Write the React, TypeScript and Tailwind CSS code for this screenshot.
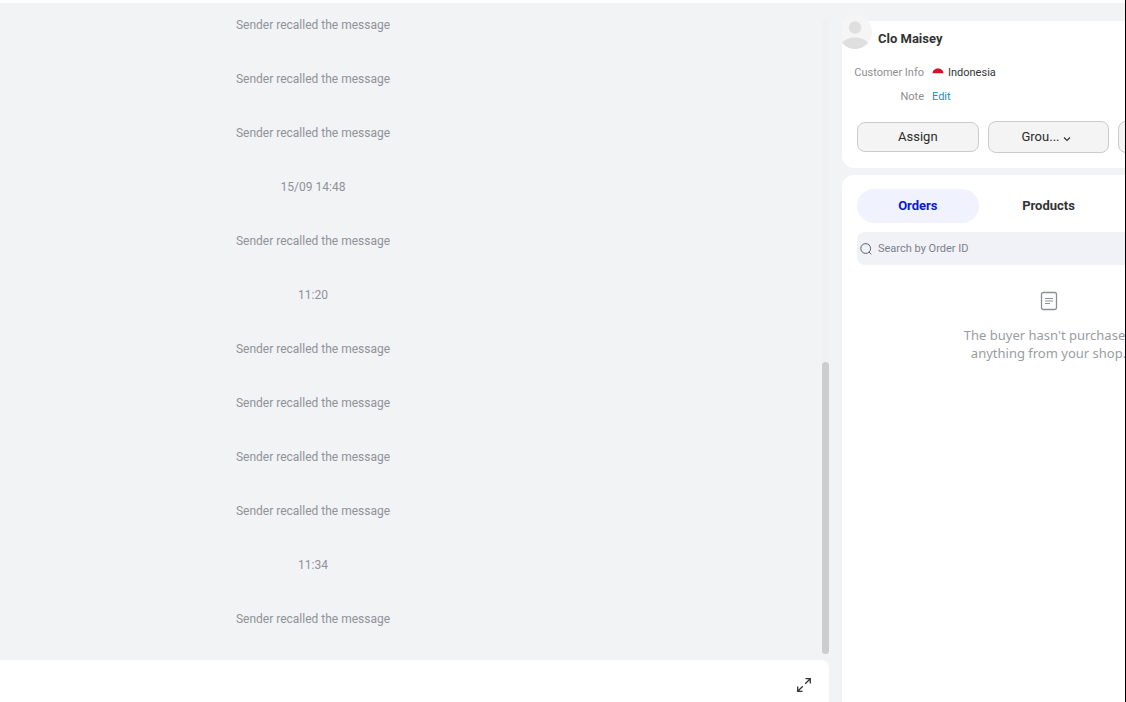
import { useState } from 'react'

const RECALLED = 'Sender recalled the message'

const messages = [
  RECALLED,
  RECALLED,
  RECALLED,
  '15/09 14:48',
  RECALLED,
  '11:20',
  RECALLED,
  RECALLED,
  RECALLED,
  RECALLED,
  '11:34',
  RECALLED,
]

function Avatar() {
  return (
    <svg viewBox="0 0 34 34" className="-mt-1.5 -ml-1 size-[34px] shrink-0" aria-hidden="true">
      <clipPath id="avatar-clip">
        <circle cx="17" cy="17" r="17" />
      </clipPath>
      <g clipPath="url(#avatar-clip)">
        <rect width="34" height="34" fill="#f5f5f5" />
        <circle cx="17" cy="12.5" r="6.2" fill="#dfdfdf" />
        <path d="M4 28c3-4 8-5.500 13-5.500s10 1.500 13 5.500c-3 4-8 6-13 6s-10-2-13-6z" fill="#dfdfdf" />
      </g>
    </svg>
  )
}

function FlagIcon() {
  return (
    <svg viewBox="0 0 12 12" className="size-3" aria-hidden="true">
      <path d="M.5 6.500C.5 3.500 3 1.500 6 1.500s5.500 2 5.500 5z" fill="#d3122d" />
      <path d="M.5 6.500C.5 9.500 3 11.500 6 11.500s5.500-2 5.500-5z" fill="#fff" />
    </svg>
  )
}

function ChevronIcon() {
  return (
    <svg viewBox="0 0 8 8" className="mt-1 size-2" fill="none" stroke="#333" strokeWidth="1.200" aria-hidden="true">
      <path d="M1 2.500l3 3 3-3" />
    </svg>
  )
}

function SearchIcon() {
  return (
    <svg viewBox="0 0 12 12" className="size-3 shrink-0" fill="none" stroke="#5c6068" aria-hidden="true">
      <circle cx="5.700" cy="5.500" r="4.900" />
      <path d="M9 9l2.300 2.300" />
    </svg>
  )
}

function OrderIcon() {
  return (
    <svg viewBox="0 0 18 20" className="h-5 w-[18px]" fill="none" stroke="#8b8f96" aria-hidden="true">
      <rect x="1.500" y="1.500" width="15" height="17" rx="1.800" strokeWidth="1.300" />
      <path d="M5 7.500h8M5 10h8M5 12.500h5" />
    </svg>
  )
}

function ExpandIcon() {
  return (
    <svg viewBox="0 0 16 16" className="size-4" fill="none" stroke="#333" strokeWidth="1.300" aria-hidden="true">
      <path d="M9.500 1.700h4.800v4.800M14.300 1.700L9.200 6.800M6.500 14.300H1.700V9.500M1.700 14.300l5.100-5.100" />
    </svg>
  )
}

function Conversation() {
  return (
    <main className="flex min-w-0 flex-1 flex-col">
      <div className="flex min-h-0 flex-1">
        <ul className="flex flex-1 flex-col gap-9 overflow-hidden pt-[13px] pr-[196px] text-center text-xs leading-[18px] text-[#8f9299]">
          {messages.map((text, index) => (
            <li key={index}>{text}</li>
          ))}
        </ul>
        <div className="mt-4 mb-1.5 flex w-[7px] flex-col justify-end rounded-full bg-[#f0f1f3]">
          <div className="h-[46%] rounded-full bg-[#cdcdcd]" />
        </div>
      </div>
      <div className="flex h-[42px] items-center justify-end rounded-tr-lg bg-white pt-2 pr-[17px]">
        <button type="button" aria-label="Expand">
          <ExpandIcon />
        </button>
      </div>
    </main>
  )
}

const actionClass =
  'flex items-center justify-center gap-1 rounded-lg border border-[#cbcbcb] bg-[#f4f4f4] text-[13px] text-[#2b2b2b]'

function CustomerCard() {
  return (
    <section className="rounded-xl rounded-tl-none bg-white pb-[15px]">
      <div className="flex h-[38px] items-start gap-1.5">
        <Avatar />
        <h1 className="text-[13px] leading-9 font-bold text-[#333]">Clo Maisey</h1>
      </div>
      <dl className="grid grid-cols-[82px_1fr] gap-x-2 pt-0.5 text-[11px] leading-6">
        <dt className="text-right text-[#8f8f8f]">Customer Info</dt>
        <dd className="flex items-center gap-1 text-[#333]">
          <FlagIcon />
          Indonesia
        </dd>
        <dt className="text-right text-[#8f8f8f]">Note</dt>
        <dd>
          <button type="button" className="text-[#1890c0]">
            Edit
          </button>
        </dd>
      </dl>
      <div className="mx-[15px] mt-3 grid grid-cols-3 items-center gap-x-[9px]">
        <button type="button" className={`${actionClass} h-[30px]`}>
          Assign
        </button>
        <button type="button" className={`${actionClass} h-8 pr-1`}>
          Grou...
          <ChevronIcon />
        </button>
        <button type="button" aria-label="More" className={`${actionClass} h-8`} />
      </div>
    </section>
  )
}

const tabs = ['Orders', 'Products']

function OrdersCard() {
  const [active, setActive] = useState('Orders')

  return (
    <section className="flex-1 rounded-t-xl bg-white px-[15px] pt-3.5">
      <div role="tablist" className="grid grid-cols-3 gap-x-[9px]">
        {tabs.map((tab) => (
          <button
            key={tab}
            type="button"
            role="tab"
            aria-selected={tab === active}
            onClick={() => setActive(tab)}
            className={`h-[34px] rounded-full text-[13px] font-bold ${
              tab === active ? 'bg-[#f0f2fe] text-[#0b1bd0]' : 'text-[#333]'
            }`}
          >
            {tab}
          </button>
        ))}
      </div>
      <label className="mt-[9px] flex h-[33px] items-center gap-1.5 rounded-lg bg-[#f1f2f7] pl-[3px]">
        <SearchIcon />
        <input
          type="search"
          aria-label="Search by Order ID"
          placeholder="Search by Order ID"
          className="h-full min-w-0 flex-1 bg-transparent text-[11px] text-[#333] outline-none placeholder:text-[#7d808c]"
        />
      </label>
      <div className="flex flex-col items-center pt-[26px]">
        <OrderIcon />
        <p className="pt-[15px] text-center font-['Noto_Sans',sans-serif] text-[13px] leading-[18px] text-[#999da3]">
          The buyer hasn't purchased
          <br />
          anything from your shop.
        </p>
      </div>
    </section>
  )
}

export default function App() {
  return (
    <div className="flex h-screen overflow-hidden border-r border-black bg-[#f2f3f5] font-[Roboto,sans-serif]">
      <div className="flex min-w-0 flex-1 border-t-[3px] border-white">
        <Conversation />
        <aside className="ml-[13px] w-[283px] shrink-0 overflow-hidden">
          <div className="flex h-full w-[413px] flex-col gap-[7px] pt-[18px]">
            <CustomerCard />
            <OrdersCard />
          </div>
        </aside>
      </div>
    </div>
  )
}
